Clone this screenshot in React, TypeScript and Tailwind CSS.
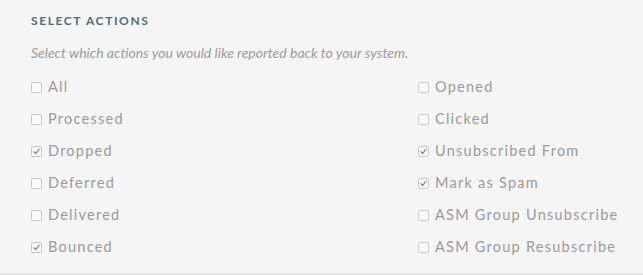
import React from "react";

const left = [
  { label: "All", checked: false },
  { label: "Processed", checked: false },
  { label: "Dropped", checked: true },
  { label: "Deferred", checked: false },
  { label: "Delivered", checked: false },
  { label: "Bounced", checked: true },
];
const right = [
  { label: "Opened", checked: false },
  { label: "Clicked", checked: false },
  { label: "Unsubscribed From", checked: true },
  { label: "Mark as Spam", checked: true },
  { label: "ASM Group Unsubscribe", checked: false },
  { label: "ASM Group Resubscribe", checked: false },
];

function Box({ checked }: { checked: boolean }) {
  return (
    <span className="flex h-[11px] w-[11px] shrink-0 items-center justify-center rounded-[2px] border border-[#c9c9c9] bg-[#fafafa]">
      {checked && (
        <svg width="9" height="9" viewBox="0 0 9 9" fill="none">
          <path d="M1.8 4.6 L3.6 6.5 L7.2 2.2" stroke="#8a8a8a" strokeWidth="1.2" strokeLinecap="round" strokeLinejoin="round" />
        </svg>
      )}
    </span>
  );
}

function Item({ label, checked }: { label: string; checked: boolean }) {
  return (
    <div className="flex h-[32px] items-center gap-[6px]">
      <Box checked={checked} />
      <span className="text-[14.5px] leading-none tracking-[1.25px] text-[#9b9b9b]">{label}</span>
    </div>
  );
}

export default function App() {
  return (
    <div className="h-[275px] w-[643px] border-b-2 border-[#e6e6e6] bg-[#f5f5f5] pl-[31px] pt-[13px]" style={{ fontFamily: "Lato, 'Open Sans', sans-serif" }}>
      <h2 className="text-[12px] font-bold leading-[16px] tracking-[1.6px] text-[#566a78]">SELECT ACTIONS</h2>
      <p className="mt-[16px] text-[14px] italic leading-[16px] text-[#9b9b9b]">
        Select which actions you would like reported back to your system.
      </p>
      <div className="mt-[10px] grid grid-cols-[387px_1fr]">
        <div className="flex flex-col">
          {left.map((i) => (
            <Item key={i.label} {...i} />
          ))}
        </div>
        <div className="flex flex-col">
          {right.map((i) => (
            <Item key={i.label} {...i} />
          ))}
        </div>
      </div>
    </div>
  );
}
